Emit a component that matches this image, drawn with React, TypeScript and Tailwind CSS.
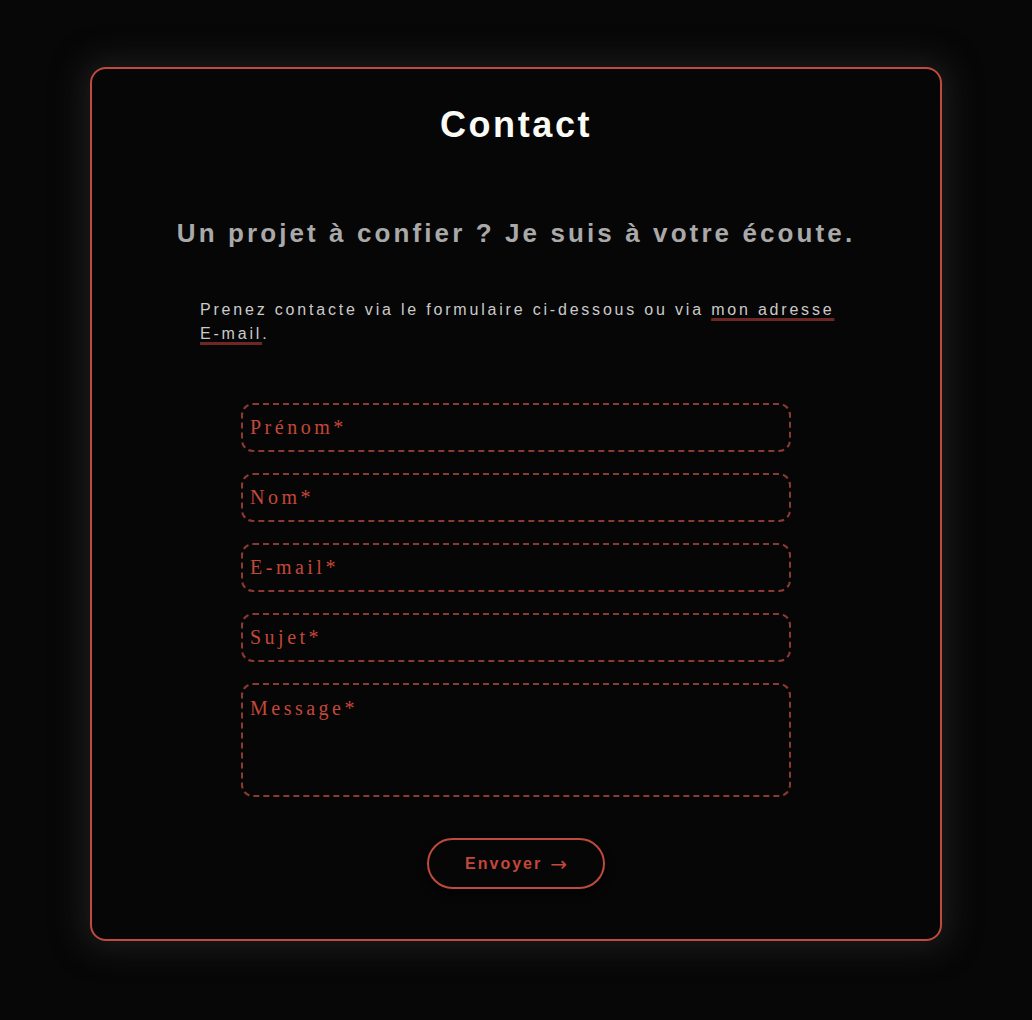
import React from "react";

const fields = ["Prénom*", "Nom*", "E-mail*", "Sujet*"];

export default function App() {
  return (
    <div className="min-h-screen bg-[#070707] pt-[67px] px-[90px] pb-[79px]" style={{ fontFamily: '"Liberation Sans", Arial, sans-serif' }}>
      <div className="w-[852px] h-[874px] border-2 border-[#bf4a3e] rounded-[16px] bg-[#060606] shadow-[0_0_30px_8px_rgba(30,30,30,0.9)] pt-[35px] flex flex-col items-center">
        <h1 className="text-[36px] leading-[41px] font-bold text-[#fbfbf6] tracking-[2.6px]">Contact</h1>
        <h2 className="mt-[73px] text-[26px] leading-[30px] font-bold text-[#a9a9a9] tracking-[3.1px]">
          Un projet à confier ? Je suis à votre écoute.
        </h2>
        <p className="self-stretch ml-[108px] mr-[96px] mt-[50px] text-[16px] leading-[24px] text-[#cacaca] tracking-[2.8px]">
          Prenez contacte via le formulaire ci-dessous ou via{" "}
          <a href="#" className="underline decoration-[#6e2824] decoration-[3px] underline-offset-[3px]">
            mon adresse <span className="whitespace-nowrap">E-mail</span>
          </a>.
        </p>
        <form className="mt-[57px] w-[550px] flex flex-col gap-[21px]" onSubmit={(e) => e.preventDefault()}>
          {fields.map((f) => (
            <input
              key={f}
              placeholder={f}
              className="h-[49px] w-full rounded-[12px] border-2 border-dashed border-[#8a3a33] bg-transparent px-[7px] text-[20px] tracking-[3.5px] text-[#c4473b] placeholder:text-[#c4473b] outline-none"
              style={{ fontFamily: '"Liberation Serif", "Times New Roman", serif' }}
            />
          ))}
          <textarea
            placeholder="Message*"
            className="h-[114px] w-full resize-none rounded-[12px] border-2 border-dashed border-[#8a3a33] bg-transparent px-[7px] pt-[8px] text-[20px] tracking-[3.5px] text-[#c4473b] placeholder:text-[#c4473b] outline-none"
            style={{ fontFamily: '"Liberation Serif", "Times New Roman", serif' }}
          />
          <div className="flex justify-center mt-[20px]">
            <button
              type="submit"
              className="w-[178px] h-[51px] rounded-full border-2 border-[#bf4a3e] text-[#c4473b] text-[16px] font-bold tracking-[2px] shadow-[0_4px_10px_rgba(0,0,0,0.8)] bg-[#060606] flex items-center justify-center"
            >
              Envoyer<span className="ml-[8px] font-normal text-[20px] leading-none tracking-normal" style={{ fontFamily: '"DejaVu Sans", sans-serif' }}>→</span>
            </button>
          </div>
        </form>
      </div>
    </div>
  );
}
